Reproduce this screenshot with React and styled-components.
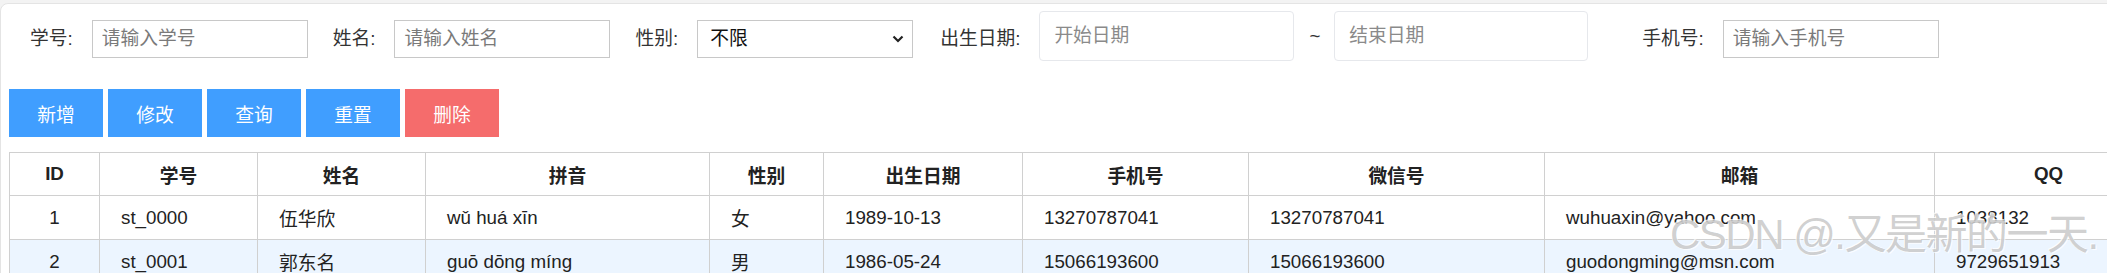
import React from "react";
import styled, { createGlobalStyle } from "styled-components";

const GlobalStyle = createGlobalStyle`
    body {
        margin: 0;
        background: #f3f3f3;
        overflow: hidden;
        font-family: "Liberation Sans", "Noto Sans CJK SC", sans-serif;
        color: #333;
    }
`

const Page = styled.div`
    position: relative;
    padding-top: 3px;
    width: 2400px;
`

const Card = styled.div`
    background: #fff;
    border: 1px solid #e4e4e4;
    border-radius: 8px;
    padding: 7px 0 40px 8px;
`

const FilterRow = styled.div`
    display: flex;
    align-items: center;
    height: 50px;
    padding-left: 21px;
`

const Field = styled.div`
    display: flex;
    align-items: center;
    margin-top: 5px;
    margin-right: ${props => props.$gap || 25}px;
`

const Label = styled.span`
    font-size: 18.75px;
    line-height: 24px;
    color: #333;
    margin-right: 19px;
    white-space: nowrap;
`

const TextInput = styled.input`
    box-sizing: border-box;
    width: 216px;
    height: 38px;
    border: 1px solid #c8c8c8;
    border-radius: 0;
    padding: 0 9px;
    font-family: inherit;
    font-size: 18.75px;
    color: #333;
    outline: none;
    &::placeholder {
        color: #7a7a7a;
    }
`

const SelectWrap = styled.div`
    position: relative;
    width: 216px;
    height: 38px;
`

const Select = styled.select`
    appearance: none;
    box-sizing: border-box;
    width: 100%;
    height: 100%;
    border: 1px solid #c8c8c8;
    border-radius: 0;
    background: #fff;
    padding: 0 12px;
    font-family: inherit;
    font-size: 18.75px;
    color: #111;
    outline: none;
`

const Chevron = styled.svg`
    position: absolute;
    right: 9px;
    top: 15px;
    pointer-events: none;
`

const DateGroup = styled.div`
    display: flex;
    align-items: center;
    margin-right: 54px;
    ${Label} {
        margin-top: 5px;
    }
`

const DateInput = styled.input`
    box-sizing: border-box;
    width: ${props => props.$w}px;
    height: 50px;
    border: 1px solid #e6e8ec;
    border-radius: 4px;
    padding: 0 14px;
    font-family: inherit;
    font-size: 18.75px;
    outline: none;
    &::placeholder {
        color: #8a8a8a;
    }
`

const Tilde = styled.span`
    font-size: 18.75px;
    margin: 0 14px 0 15px;
    color: #333;
`

const ButtonBar = styled.div`
    display: flex;
    gap: 5px;
    margin-top: 28px;
`

const Button = styled.button`
    width: 94px;
    height: 48px;
    border: none;
    border-radius: 0;
    padding: 0;
    background: ${props => props.$danger ? "#f56c6c" : "#409eff"};
    color: #fff;
    font-family: inherit;
    font-size: 18.75px;
    cursor: pointer;
`

const Table = styled.table`
    margin-top: 15px;
    border-collapse: collapse;
    table-layout: fixed;
    width: 2153px;
    font-size: 18.75px;
`

const Col = styled.col`
    width: ${props => props.$w}px;
`

const Th = styled.th`
    height: 42px;
    padding: 0;
    border: 1px solid #d0d0d0;
    font-weight: bold;
    color: #222;
    text-align: center;
`

const Row = styled.tr`
    background: ${props => props.$alt ? "#ecf5ff" : "#fff"};
`

const Td = styled.td`
    height: 43px;
    padding: 0 0 0 ${props => props.$center ? 0 : 21}px;
    border: 1px solid #d0d0d0;
    color: #222;
    text-align: ${props => props.$center ? "center" : "left"};
    white-space: nowrap;
`

const Watermark = styled.div`
    position: absolute;
    left: 1670px;
    top: 210px;
    font-size: 42px;
    line-height: 50px;
    letter-spacing: -1.5px;
    color: rgba(150, 150, 150, 0.45);
    text-shadow: 1px 1px 0 rgba(255,255,255,0.8), -1px -1px 0 rgba(255,255,255,0.8);
    white-space: nowrap;
    pointer-events: none;
`

const columns = [
    { title: "ID", w: 90 },
    { title: "学号", w: 158 },
    { title: "姓名", w: 168 },
    { title: "拼音", w: 284 },
    { title: "性别", w: 114 },
    { title: "出生日期", w: 199 },
    { title: "手机号", w: 226 },
    { title: "微信号", w: 296 },
    { title: "邮箱", w: 390 },
    { title: "QQ", w: 228 },
]

const students = [
    ["1", "st_0000", "伍华欣", "wǔ huá xīn", "女", "1989-10-13", "13270787041", "13270787041", "wuhuaxin@yahoo.com", "1038132"],
    ["2", "st_0001", "郭东名", "guō dōng míng", "男", "1986-05-24", "15066193600", "15066193600", "guodongming@msn.com", "9729651913"],
]

function App() {
    return (
        <Page>
            <GlobalStyle />
            <Card>
                <FilterRow>
                    <Field>
                        <Label>学号:</Label>
                        <TextInput placeholder="请输入学号" />
                    </Field>
                    <Field>
                        <Label>姓名:</Label>
                        <TextInput placeholder="请输入姓名" />
                    </Field>
                    <Field $gap={27}>
                        <Label>性别:</Label>
                        <SelectWrap>
                            <Select defaultValue="all">
                                <option value="all">不限</option>
                                <option value="m">男</option>
                                <option value="f">女</option>
                            </Select>
                            <Chevron width="12" height="8" viewBox="0 0 12 8">
                                <path d="M1.5 1.5 L6 6 L10.5 1.5" fill="none" stroke="#222" strokeWidth="2.2" />
                            </Chevron>
                        </SelectWrap>
                    </Field>
                    <DateGroup>
                        <Label>出生日期:</Label>
                        <DateInput $w={255} placeholder="开始日期" />
                        <Tilde>~</Tilde>
                        <DateInput $w={254} placeholder="结束日期" />
                    </DateGroup>
                    <Field>
                        <Label>手机号:</Label>
                        <TextInput placeholder="请输入手机号" />
                    </Field>
                </FilterRow>

                <ButtonBar>
                    <Button>新增</Button>
                    <Button>修改</Button>
                    <Button>查询</Button>
                    <Button>重置</Button>
                    <Button $danger>删除</Button>
                </ButtonBar>

                <Table>
                    <colgroup>
                        {columns.map(c => <Col key={c.title} $w={c.w} />)}
                    </colgroup>
                    <thead>
                        <tr>
                            {columns.map(c => <Th key={c.title}>{c.title}</Th>)}
                        </tr>
                    </thead>
                    <tbody>
                        {students.map((s, i) => (
                            <Row key={s[0]} $alt={i % 2 === 1}>
                                {s.map((v, j) => <Td key={j} $center={j === 0}>{v}</Td>)}
                            </Row>
                        ))}
                    </tbody>
                </Table>
            </Card>
            <Watermark>CSDN @.又是新的一天.</Watermark>
        </Page>
    )
}

export default App;
